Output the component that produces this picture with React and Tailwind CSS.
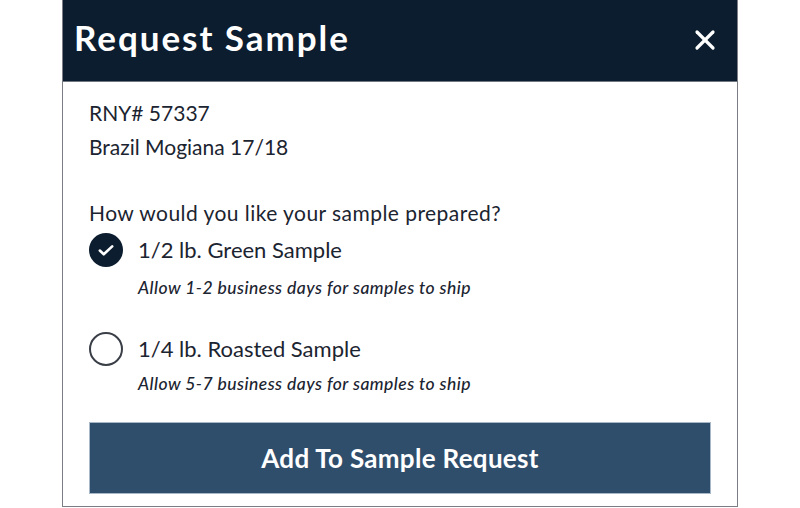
import { X } from 'lucide-react';

const options = [
  { label: '1/2 lb. Green Sample', note: 'Allow 1-2 business days for samples to ship', checked: true },
  { label: '1/4 lb. Roasted Sample', note: 'Allow 5-7 business days for samples to ship', checked: false },
];

const Radio = ({ checked }) =>
  checked ? (
    <span className="flex items-center justify-center w-[34px] h-[34px] rounded-full bg-[#0c1d2f]">
      <svg width="18" height="18" viewBox="0 0 16 16" fill="none">
        <path d="M2.5 8.5l3.5 3.3 7.5-7" stroke="white" strokeWidth="2.3" strokeLinecap="round" strokeLinejoin="round" />
      </svg>
    </span>
  ) : (
    <span className="block w-[34px] h-[34px] rounded-full border-2 border-[#3a3f47] bg-white" />
  );

const App = () => {
  return (
    <div className="w-[800px] h-[508px] bg-white font-['Lato',sans-serif] text-[#1b2430]">
      <div className="ml-[62px] w-[676px] h-[507px] border-x border-b border-[#7b7f85] flex flex-col">
        {/* Header */}
        <div className="h-[82px] bg-[#0b1d2f] border-b border-[#6e7780] flex items-center justify-between pl-[11px] pr-[16px]">
          <h2 className="text-white font-bold text-[35px] tracking-[1.95px] -mt-[6px]">Request Sample</h2>
          <X className="text-white -mt-[2px]" size={32} strokeWidth={2.4} />
        </div>

        {/* Body */}
        <div className="px-[26px] pt-[14px] flex flex-col">
          <p className="text-[21px] leading-[34px]">RNY# 57337</p>
          <p className="text-[21px] leading-[34px]">Brazil Mogiana 17/18</p>

          <p className="text-[21px] tracking-[0.45px] leading-[34px] mt-[32px]">How would you like your sample prepared?</p>

          {options.map((opt, i) => (
            <div key={opt.label} className={i === 0 ? 'mt-[3px]' : 'mt-[33px]'}>
              <div className="flex items-center gap-[15px] h-[34px]">
                <Radio checked={opt.checked} />
                <span className="text-[22px] leading-[34px]">{opt.label}</span>
              </div>
              <p className={`pl-[49px] italic font-medium text-[17.5px] tracking-[0.45px] leading-[22px] ${i === 0 ? 'mt-[10px]' : 'mt-[7px]'}`}>
                {opt.note}
              </p>
            </div>
          ))}

          <button className="mt-[27px] h-[72px] w-full bg-[#2f4e6c] border border-[#a9b8c8] text-white font-bold text-[26px] tracking-[0.3px]">
            Add To Sample Request
          </button>
        </div>
      </div>
    </div>
  );
};

export default App;
